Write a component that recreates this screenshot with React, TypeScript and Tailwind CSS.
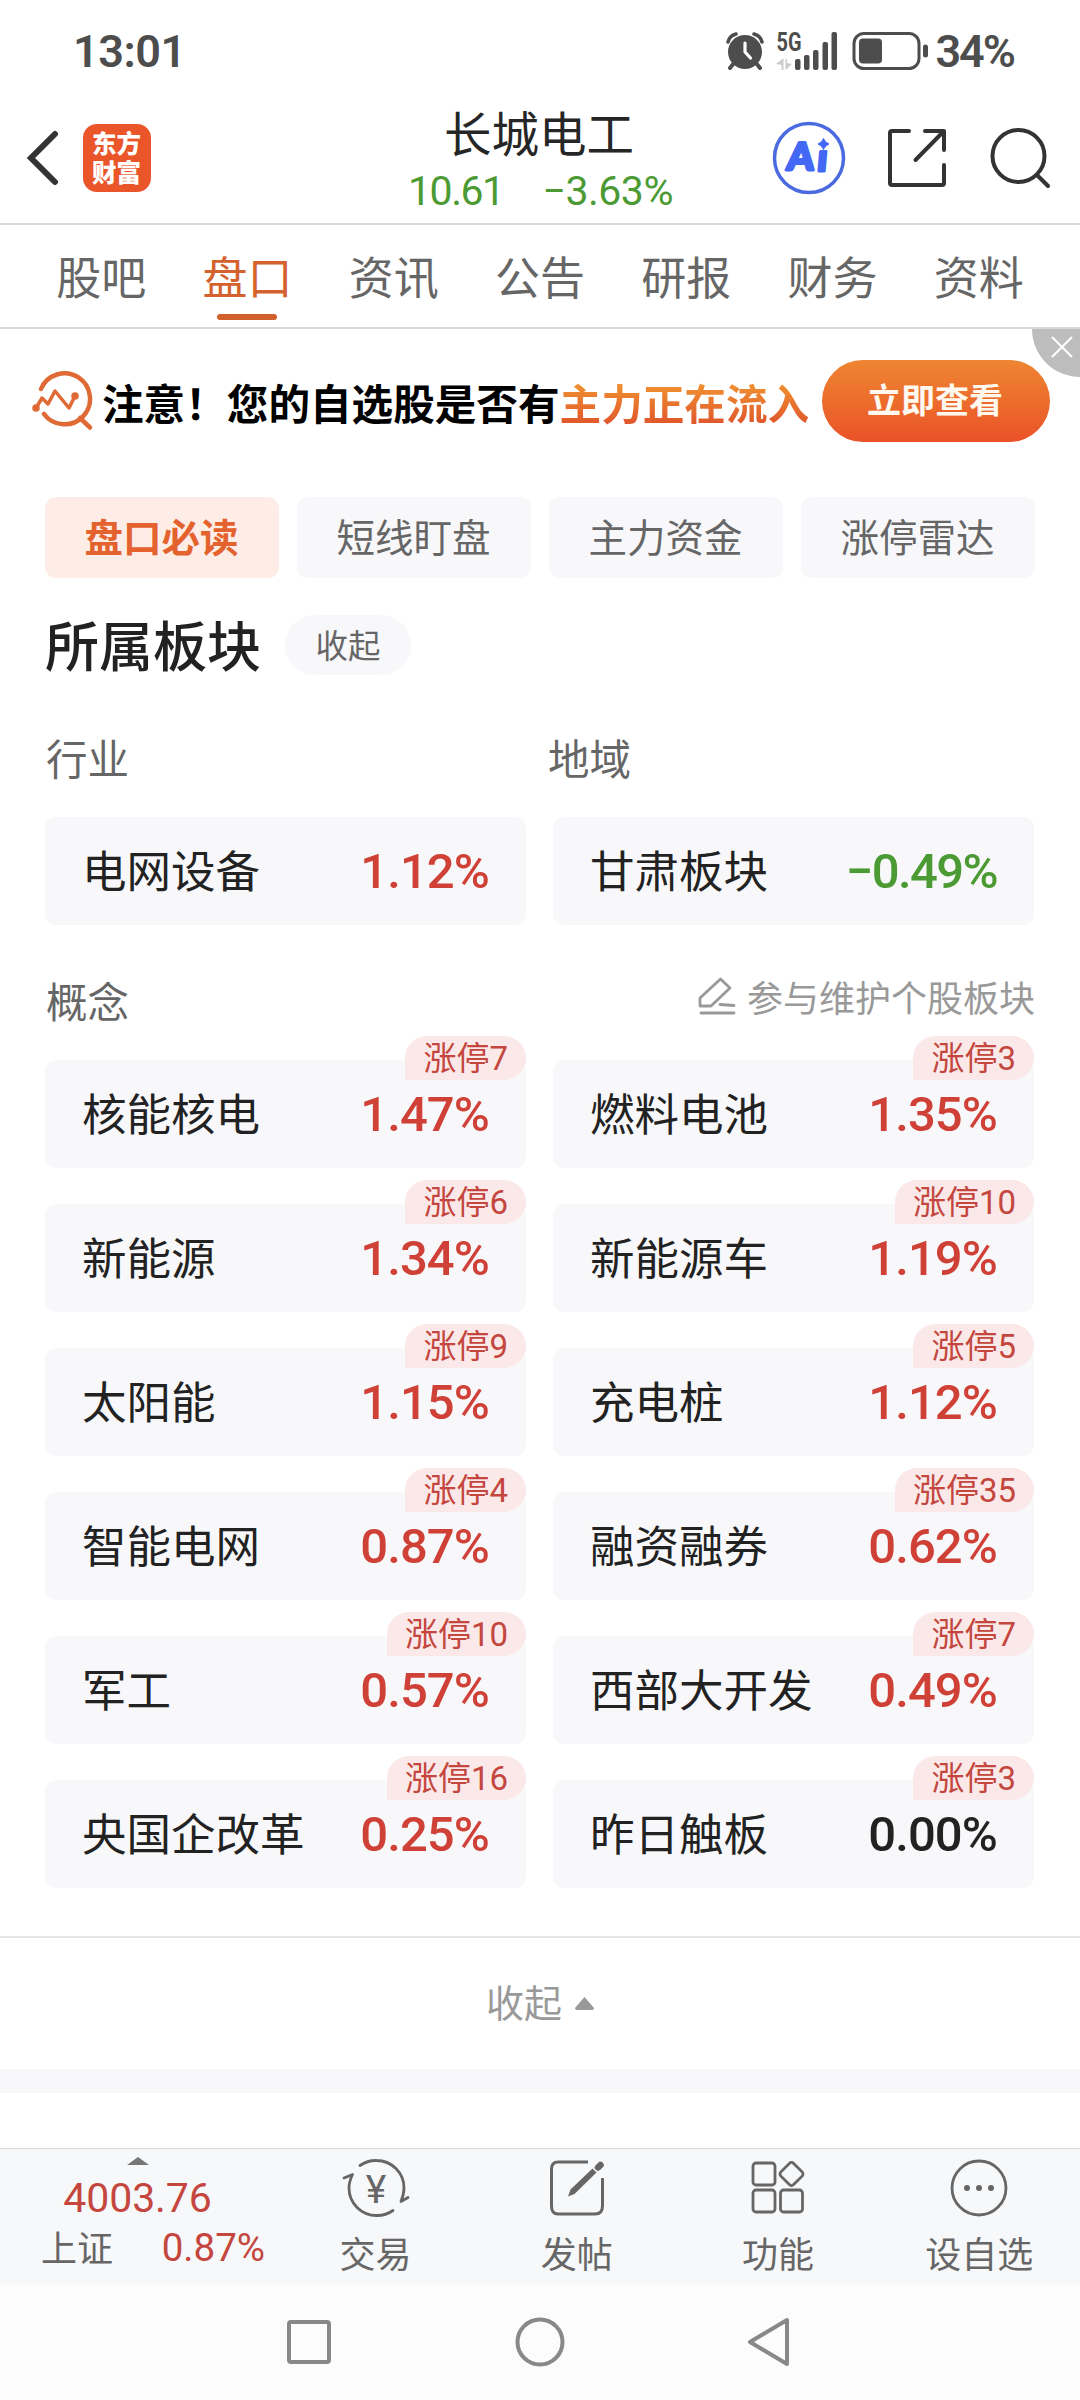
import clsx from "clsx";

const tabs = ["股吧", "盘口", "资讯", "公告", "研报", "财务", "资料"];
const filters = ["盘口必读", "短线盯盘", "主力资金", "涨停雷达"];

type Board = { name: string; change: string; limitUp?: number };

const concepts: Board[] = [
  { name: "核能核电", change: "1.47%", limitUp: 7 },
  { name: "燃料电池", change: "1.35%", limitUp: 3 },
  { name: "新能源", change: "1.34%", limitUp: 6 },
  { name: "新能源车", change: "1.19%", limitUp: 10 },
  { name: "太阳能", change: "1.15%", limitUp: 9 },
  { name: "充电桩", change: "1.12%", limitUp: 5 },
  { name: "智能电网", change: "0.87%", limitUp: 4 },
  { name: "融资融券", change: "0.62%", limitUp: 35 },
  { name: "军工", change: "0.57%", limitUp: 10 },
  { name: "西部大开发", change: "0.49%", limitUp: 7 },
  { name: "央国企改革", change: "0.25%", limitUp: 16 },
  { name: "昨日触板", change: "0.00%", limitUp: 3 },
];

const changeStyle = (change: string) => {
  const value = parseFloat(change.replace("−", "-"));
  if (value > 0) return "text-[#cf4036] tracking-[-0.900px]";
  if (value < 0) return "text-[#4c9a33] tracking-[-1.600px]";
  return "text-[#222222] tracking-[-0.900px]";
};

const StatusBar = () => (
  <div className="h-[102px] flex items-center justify-between pl-[73px] pr-[66px] text-[#4d4d4d] font-['Roboto',sans-serif] font-semibold">
    <span className="text-[45px] leading-none tracking-[-0.5px]">13:01</span>
    <div className="flex items-center">
      <svg width="38" height="38" viewBox="0 0 38 38" className="mr-[12px]">
        <circle cx="19" cy="20" r="17" fill="#4d4d4d" />
        <path d="M2 10C3 6 6 3 10 2M36 10C35 6 32 3 28 2" stroke="#4d4d4d" strokeWidth="3.5" fill="none" strokeLinecap="round" />
        <path d="M8 31L4 36M30 31L34 36" stroke="#4d4d4d" strokeWidth="4" strokeLinecap="round" />
        <path d="M19 11V20L24.500 26" stroke="#fff" strokeWidth="3.200" fill="none" strokeLinecap="round" strokeLinejoin="round" />
      </svg>
      <svg width="62" height="52" viewBox="0 -6 62 52" className="mr-[14px]">
        <text x="0.500" y="20" fontSize="25" fontWeight="700" textLength="25" lengthAdjust="spacingAndGlyphs" fill="#4d4d4d">5G</text>
        <path d="M7.500 27V39H5.500V34L0 33ZM9.500 39V27L11 29V32L16 33Z" fill="#cccccc" />
        <rect x="19" y="28" width="5.500" height="11" rx="2" fill="#4d4d4d" />
        <rect x="28" y="24" width="5.500" height="15" rx="2" fill="#4d4d4d" />
        <rect x="37" y="19" width="5.500" height="20" rx="2" fill="#4d4d4d" />
        <rect x="46.500" y="11" width="5.500" height="28" rx="2" fill="#4d4d4d" />
        <rect x="55.500" y="1" width="5.500" height="38" rx="2" fill="#4d4d4d" />
      </svg>
      <svg width="78" height="38" viewBox="0 0 78 38" className="mr-[5px]">
        <rect x="2" y="1.500" width="65" height="35" rx="10" stroke="#4d4d4d" strokeWidth="3" fill="none" />
        <rect x="7" y="6.500" width="23" height="25" rx="4" fill="#4d4d4d" />
        <rect x="71" y="12.500" width="5" height="13" rx="2.500" fill="#4d4d4d" />
      </svg>
      <span className="text-[45px] leading-none tracking-[-2px]">34%</span>
    </div>
  </div>
);

const Header = () => (
  <header className="h-[123px] flex items-center justify-between pl-[26px] pr-[28px] pb-[10px] border-b-2 border-[#dadada]">
    <div className="flex items-center w-[308px]">
      <svg width="34" height="56" viewBox="0 0 34 56" fill="none" stroke="#333" strokeWidth="6" strokeLinecap="round">
        <path d="M29 4L5 28L29 52" />
      </svg>
      <div className="ml-[23px] size-[68px] rounded-[14px] bg-[#ea5529] flex items-center justify-center">
        <span className="w-[50px] break-all text-white font-black text-[24.500px] leading-[29px] pb-[1px]">东方财富</span>
      </div>
    </div>
    <div className="flex flex-col items-center pt-[5px]">
      <h1 className="text-[47.500px] leading-[56px] text-[#262626]">长城电工</h1>
      <div className="flex gap-[39px] pl-[3px] text-[41px] leading-[50px] pt-[6px] text-[#4c9a33] font-['Roboto',sans-serif]">
        <span className="tracking-[-1.500px]">10.61</span>
        <span className="tracking-[-0.500px]">−3.63%</span>
      </div>
    </div>
    <div className="flex items-center w-[308px] justify-end">
      <svg width="74" height="74" viewBox="0 0 74 74">
        <circle cx="37" cy="37" r="34.500" stroke="#4a6be0" strokeWidth="3.500" fill="none" />
        <text y="49" fontFamily="Lato, sans-serif" fontWeight="900" fontSize="38" fill="#4368f5" stroke="#4368f5" strokeWidth="3" strokeLinejoin="round" transform="translate(4 0) skewX(-5)">
          <tspan x="14.500">A</tspan>
          <tspan x="45" dy="1">ı</tspan>
        </text>
        <path d="M51.500 17.500Q53 21.500 57 23Q53 24.500 51.500 28.500Q50 24.500 46 23Q50 21.500 51.500 17.500Z" fill="#4368f5" stroke="#4368f5" />
      </svg>
      <svg width="60" height="60" viewBox="0 0 60 60" fill="none" stroke="#333" strokeWidth="4" strokeLinecap="round" strokeLinejoin="round" className="ml-[41px]">
        <path d="M22 3H5Q3 3 3 5V55Q3 57 5 57H55Q57 57 57 55V37" />
        <path d="M38 3H57V22M56 4L28.500 32" />
      </svg>
      <svg width="62" height="62" viewBox="0 0 62 62" fill="none" stroke="#333" strokeWidth="4" strokeLinecap="round" className="ml-[43px]">
        <circle cx="28.500" cy="29" r="26" />
        <path d="M47 48L58 59" />
      </svg>
    </div>
  </header>
);

const TabBar = () => (
  <nav className="h-[104px] grid grid-cols-7 px-[28px] border-b-2 border-[#dadada] text-[45px] text-[#666]">
    {tabs.map((tab) => {
      const active = tab === "盘口";
      return (
        <div key={tab} className={clsx("flex flex-col items-center", active && "text-[#d4622f]")}>
          <span className="h-[89px] leading-[101px]">{tab}</span>
          {active && <span className="w-[60px] h-[6px] rounded-full bg-[#d1602d]" />}
        </div>
      );
    })}
  </nav>
);

const Banner = () => (
  <section className="relative h-[144px] flex items-center pl-[32px] pr-[30px] overflow-hidden">
    <svg width="62" height="60" viewBox="0 0 62 60" fill="none" stroke="#e06a35" strokeWidth="4.500" strokeLinecap="round" strokeLinejoin="round">
      <path d="M9 18A25.500 25.500 0 1 1 12 43" />
      <path d="M48 47L58 56.500" />
      <path d="M4 37L10 27L16 33L23 20L37 37L43 25" strokeWidth="3.500" />
      <circle cx="4" cy="37" r="1.500" />
      <circle cx="43" cy="25" r="1.500" />
    </svg>
    <p className="ml-[8px] pt-[2px] flex text-[41.600px] leading-[60px] font-bold text-black whitespace-nowrap">
      注意！您的自选股是否有
      <span className="bg-linear-to-b from-[#f09030] from-20% to-[#e0582c] to-85% bg-clip-text text-transparent">主力正在流入</span>
    </p>
    <button className="ml-auto w-[228px] h-[82px] rounded-full bg-linear-to-b from-[#ee8532] to-[#ea5127] text-[#fff8ee] text-[34px] font-bold pb-[6px] pr-[2px]">
      立即查看
    </button>
    <div className="absolute right-0 top-0 w-[48px] h-[48px] rounded-bl-full bg-[#bdbdbd]">
      <svg width="22" height="22" viewBox="0 0 22 22" stroke="#fff" strokeWidth="2" className="ml-[19px] mt-[7px]">
        <path d="M1 1L21 21M21 1L1 21" />
      </svg>
    </div>
  </section>
);

const BoardCard = ({ name, change, limitUp }: Board) => (
  <div className="relative h-[108px] rounded-[11px] bg-[#f8f8fa] flex items-center justify-between pl-[37px] pr-[37px]">
    <span className="text-[44.500px] leading-none text-[#222] pb-[4px]">{name}</span>
    <span className={clsx("text-[49px] leading-none font-medium pt-px font-['Roboto',sans-serif]", changeStyle(change))}>
      {change}
    </span>
    {limitUp !== undefined && (
      <span className="absolute right-0 -top-[24px] h-[44px] px-[18px] rounded-[22px] rounded-bl-none bg-[#fae9e8] text-[#c4463e] text-[33px] leading-[41px]">
        涨停<span className="font-['Roboto',sans-serif]">{limitUp}</span>
      </span>
    )}
  </div>
);

const Boards = () => (
  <main className="px-[45px] pt-[24px]">
    <div className="grid grid-cols-4 gap-[18px]">
      {filters.map((item, i) => (
        <div
          key={item}
          className={clsx(
            "h-[81px] rounded-[11px] flex items-center justify-center text-[38.500px] pb-[3px] pr-px",
            i === 0 ? "bg-[#fdede6] text-[#e4622e] font-bold" : "bg-[#f8f8fa] text-[#666]"
          )}
        >
          {item}
        </div>
      ))}
    </div>

    <div className="flex items-center h-[60px] mt-[37px]">
      <h2 className="text-[54px] leading-none font-medium text-[#222] pb-[2px]">所属板块</h2>
      <span className="ml-[24px] w-[126px] h-[60px] rounded-full bg-[#f8f8fa] text-[#666] text-[32.500px] leading-[58px] text-center">收起</span>
    </div>

    <div className="grid grid-cols-2 gap-[12px] mt-[55px] h-[60px] text-[41.500px] leading-[54px] text-[#666]">
      <span className="ml-[1px]">行业</span>
      <span className="ml-[2px]">地域</span>
    </div>
    <div className="grid grid-cols-2 gap-x-[27px] mt-[27px] mr-[1px]">
      <BoardCard name="电网设备" change="1.12%" />
      <BoardCard name="甘肃板块" change="−0.49%" />
    </div>

    <div className="flex justify-between items-center h-[60px] mt-[45px] ml-[1px] text-[#666] text-[41.500px]">
      <span className="leading-[54px]">概念</span>
      <span className="flex items-center text-[36px] leading-[50px] text-[#999] pb-[8px]">
        <svg width="38" height="40" viewBox="0 0 38 40" fill="none" stroke="#999" strokeWidth="2.800" strokeLinecap="round" strokeLinejoin="round" className="mr-[11px]">
          <path d="M2 30V22L22.500 3L32 12L13 30ZM22 28.500L36 29.500M3 37H36" />
        </svg>
        参与维护个股板块
      </span>
    </div>
    <div className="grid grid-cols-2 gap-x-[27px] gap-y-[36px] mt-[30px] mr-[1px]">
      {concepts.map((board) => (
        <BoardCard key={board.name} {...board} />
      ))}
    </div>
  </main>
);

const CollapseRow = () => (
  <>
    <div className="mt-[48px] h-[133px] border-t-2 border-[#e6e6e6] flex items-center justify-center gap-[13px] text-[38px] text-[#999]">
      <span className="pb-[6px]">收起</span>
      <svg width="19" height="13" viewBox="0 0 19 13" fill="#999">
        <path d="M9.500 0L19 11Q19 13 17 13H2Q0 13 0 11Z" />
      </svg>
    </div>
    <div className="h-[24px] bg-[#f8f8fa]" />
  </>
);

const TradeIcon = () => (
  <svg width="68" height="60" viewBox="0 0 68 60" fill="none" stroke="#666" strokeWidth="2.800" strokeLinecap="round" strokeLinejoin="round">
    <path d="M18 7.500A27.500 27.500 0 0 1 34.500 2.500A27.500 27.500 0 0 1 62 30Q62 36 59 43.500L66 39.500" />
    <path d="M51 52.500A27.500 27.500 0 0 1 34.500 57.500A27.500 27.500 0 0 1 7 30Q7 24 10.500 16.500L2 20" />
    <text x="34" y="44.500" textAnchor="middle" fontFamily="Roboto, sans-serif" fontSize="39" fill="#666" stroke="none">¥</text>
  </svg>
);

const PostIcon = () => (
  <svg width="56" height="60" viewBox="0 0 56 60" fill="none" stroke="#666" strokeWidth="3" strokeLinejoin="round">
    <path d="M39 4H9Q2.500 4 2.500 11V48Q2.500 56 9 56H46Q53.500 56 53.500 48V20" />
    <path d="M19 38.500L21.500 31.500L43.500 10.500L47.500 14.500L25.500 36Z" fill="#666" stroke="none" />
    <path d="M49 9.500L51.500 7" strokeWidth="6.500" strokeLinecap="round" />
  </svg>
);

const FeatureIcon = () => (
  <svg width="54" height="60" viewBox="0 0 54 60" fill="none" stroke="#666" strokeWidth="2.800">
    <rect x="2" y="5" width="22" height="22" rx="3" />
    <rect x="2" y="32" width="22" height="22" rx="3" />
    <rect x="29.500" y="32" width="22" height="22" rx="3" />
    <rect x="31.500" y="7" width="18" height="18" rx="3" transform="rotate(45 40.500 16)" />
  </svg>
);

const MoreIcon = () => (
  <svg width="58" height="60" viewBox="0 0 58 60" fill="#666">
    <circle cx="29" cy="30" r="27" fill="none" stroke="#666" strokeWidth="2.800" />
    <circle cx="17" cy="30" r="3" />
    <circle cx="29" cy="30" r="3" />
    <circle cx="41" cy="30" r="3" />
  </svg>
);

const actions = [
  { label: "交易", icon: <TradeIcon /> },
  { label: "发帖", icon: <PostIcon /> },
  { label: "功能", icon: <FeatureIcon /> },
  { label: "设自选", icon: <MoreIcon /> },
];

const BottomBar = () => (
  <footer className="h-[136px] bg-[#f7f8fa] border-t border-[#d4d6d9] flex">
    <div className="w-[275px] pt-[8px] flex flex-col items-center text-[#c4463e] font-['Roboto',sans-serif]">
      <svg width="22" height="8" viewBox="0 0 22 8" fill="#777">
        <path d="M11 0L22 8H0Z" />
      </svg>
      <span className="text-[41px] leading-[50px] pt-[8px] tracking-[-0.100px]">4003.76</span>
      <div className="flex w-full justify-between pl-[41px] pr-[10px] leading-[46px]">
        <span className="text-[#666] text-[36px] font-['Noto_Sans_CJK_SC',sans-serif]">上证</span>
        <span className="text-[38.500px] pt-[2px]">0.87%</span>
      </div>
    </div>
    <div className="w-[805px] grid grid-cols-4">
      {actions.map(({ label, icon }) => (
        <div key={label} className="flex flex-col items-center pt-[9px] text-[36px] leading-[48px] text-[#666]">
          {icon}
          <span className="pt-[10px]">{label}</span>
        </div>
      ))}
    </div>
  </footer>
);

const SystemNav = () => (
  <div className="h-[116px] bg-[#fcfcfc] flex justify-center items-center gap-[182px]">
    <svg width="48" height="52" viewBox="0 0 48 52" fill="none" stroke="#888" strokeWidth="4">
      <rect x="4" y="6" width="40" height="40" rx="2" />
    </svg>
    <svg width="50" height="52" viewBox="0 0 50 52" fill="none" stroke="#888" strokeWidth="4">
      <circle cx="25" cy="26" r="22.500" />
    </svg>
    <svg width="48" height="52" viewBox="0 0 48 52" fill="none" stroke="#888" strokeWidth="4" strokeLinejoin="round">
      <path d="M3 26L40 4V48Z" />
    </svg>
  </div>
);

const App = () => (
  <div className="w-[1080px] h-[2400px] bg-white flex flex-col overflow-hidden font-['Noto_Sans_CJK_SC',sans-serif]">
    <StatusBar />
    <Header />
    <TabBar />
    <Banner />
    <Boards />
    <CollapseRow />
    <div className="flex-1" />
    <BottomBar />
    <SystemNav />
  </div>
);

export default App;
